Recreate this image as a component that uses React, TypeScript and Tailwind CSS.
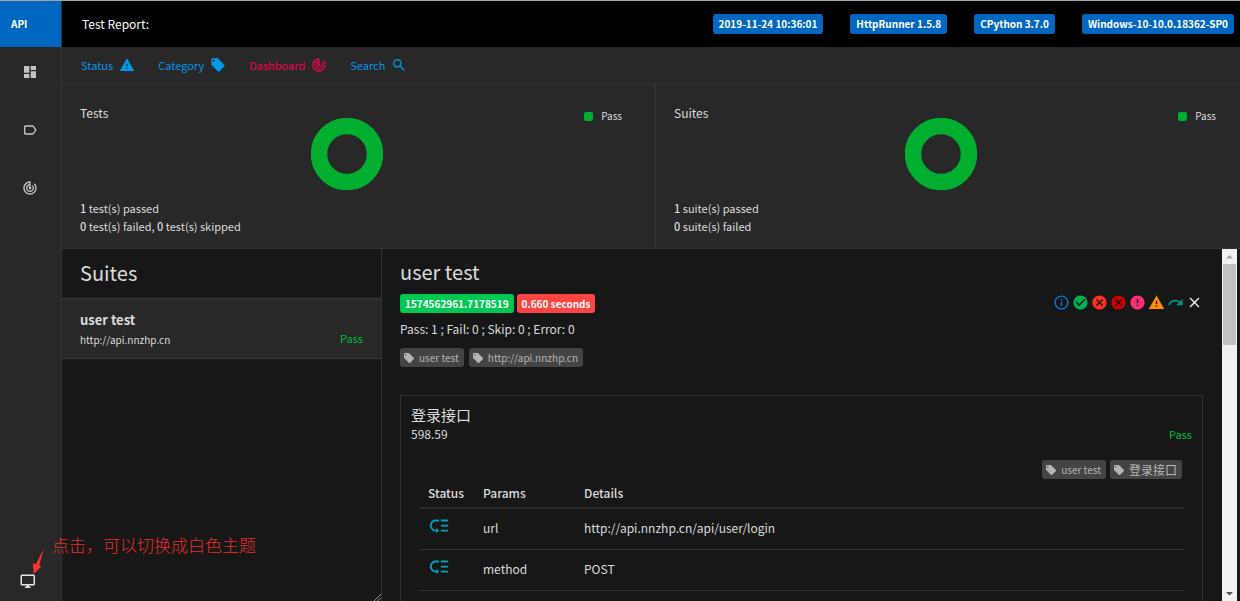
import type { ReactNode } from "react";
import {
  MdCancel,
  MdCheckCircle,
  MdClose,
  MdDashboard,
  MdError,
  MdInfoOutline,
  MdLabelOutline,
  MdLocalOffer,
  MdLowPriority,
  MdRedo,
  MdSearch,
  MdTrackChanges,
  MdWarning,
} from "react-icons/md";

const environment = ["2019-11-24 10:36:01", "HttpRunner 1.5.8", "CPython 3.7.0", "Windows-10-10.0.18362-SP0"];

const rows = [
  { param: "url", details: "http://api.nnzhp.cn/api/user/login" },
  { param: "method", details: "POST" },
];

function Donut() {
  return (
    <svg viewBox="0 0 72 72" className="h-[72px] w-[72px]" role="img" aria-label="All passed">
      <circle cx="36" cy="36" r="28" fill="none" stroke="#00af30" strokeWidth="16.500" />
    </svg>
  );
}

function Summary({ title, className, children }: { title: string; className: string; children: ReactNode }) {
  return (
    <section className={"flex flex-1 flex-col justify-between border-[#383838] pt-[19px] pb-[13px] pl-[18px] " + className}>
      <div className="grid grid-cols-[231px_72px_1fr]">
        <h2>{title}</h2>
        <div className="pt-[14px]">
          <Donut />
        </div>
        <div className="flex items-center gap-2 justify-self-end self-start pt-[3px] text-[10px]">
          <span className="h-[9px] w-[9px] rounded-xs bg-[#00af30]" />
          Pass
        </div>
      </div>
      <div className="text-[11px]">{children}</div>
    </section>
  );
}

function Tag({ children }: { children: ReactNode }) {
  return (
    <span className="flex h-[19px] items-center gap-1 rounded-[3px] bg-[#444] pr-[5px] pl-[3px] text-[10px] text-[#b5b5b5]">
      <MdLocalOffer className="h-3 w-3" />
      {children}
    </span>
  );
}

export default function App() {
  return (
    <div
      lang="zh-CN"
      className="relative flex h-screen overflow-hidden border-t border-[#a5a5a5] bg-[#171717] font-['Noto_Sans_CJK_SC',sans-serif] text-xs leading-[18px] text-[#dcdcdc]"
    >
      <aside className="flex w-[62px] shrink-0 flex-col border-r border-[#333] bg-[#282828] text-[#c4c4c4]">
        <a href="#home" className="flex h-[46px] items-center bg-[#0067c0] pl-[11px] text-[10px] font-bold text-white">
          API
        </a>
        <nav className="flex flex-col items-center gap-[42px] pt-[17px]">
          <button aria-label="Suites" className="mr-px">
            <MdDashboard className="h-4 w-4" />
          </button>
          <button aria-label="Categories" className="mr-px">
            <MdLabelOutline className="h-4 w-4" />
          </button>
          <button aria-label="Dashboard" className="mr-px">
            <MdTrackChanges className="h-4 w-4" />
          </button>
        </nav>
        <button aria-label="Switch theme" className="mt-auto mb-3 ml-5 self-start text-[#e4e4e4]">
          <svg viewBox="0 0 16 16" className="h-4 w-4" aria-hidden="true">
            <rect x="1.250" y="2.250" width="13" height="9.500" rx="0.800" fill="none" stroke="currentColor" strokeWidth="1.500" />
            <path d="M6.500 12H9V13.500H10.500V15H5V13.500H6.500Z" fill="currentColor" />
          </svg>
        </button>
      </aside>

      <div className="flex min-w-0 flex-1 flex-col">
        <header className="flex h-[46px] shrink-0 items-center justify-between bg-black pr-[6px] pl-5">
          <h1 className="text-white">Test Report:</h1>
          <div className="flex gap-[27px] text-[10px] font-bold text-white">
            {environment.map((label) => (
              <span key={label} className="flex h-5 items-center rounded-[3px] bg-[#0067c0] px-[6px]">
                {label}
              </span>
            ))}
          </div>
        </header>

        <nav className="flex h-[38px] shrink-0 items-center gap-[23px] border-b border-[#333] bg-[#282828] pb-[2px] pl-[19px] text-[11px] text-[#0397e8]">
          <button className="flex items-center gap-[6px]">
            Status <MdWarning className="h-4 w-4" />
          </button>
          <button className="flex items-center gap-[6px]">
            Category <MdLocalOffer className="h-4 w-4" />
          </button>
          <button className="flex items-center gap-[6px] text-[#f0034f]">
            Dashboard <MdTrackChanges className="h-4 w-4" />
          </button>
          <button className="flex items-center gap-[6px]">
            Search <MdSearch className="h-4 w-4" />
          </button>
        </nav>

        <div className="flex h-[164px] shrink-0 border-b border-[#333] bg-[#282828]">
          <Summary title="Tests" className="border-r pr-[33px]">
            <p>
              <b className="font-medium">1</b> test(s) passed
            </p>
            <p>
              <b className="font-medium">0</b> test(s) failed, <b className="font-medium">0</b> test(s) skipped
            </p>
          </Summary>
          <Summary title="Suites" className="pr-6">
            <p>
              <b className="font-medium">1</b> suite(s) passed
            </p>
            <p>
              <b className="font-medium">0</b> suite(s) failed
            </p>
          </Summary>
        </div>

        <main className="flex min-h-0 flex-1">
          <section className="relative flex w-[320px] shrink-0 flex-col border-r border-[#333]">
            <h2 className="flex h-[49px] shrink-0 items-center pb-[2px] pl-[18px] text-xl">Suites</h2>
            <a href="#suite" className="flex items-end justify-between border-y border-[#383838] bg-[#282828] pt-3 pr-[18px] pb-[9px] pl-[18px]">
              <span className="flex flex-col gap-[2px]">
                <b className="text-[13px]">user test</b>
                <span className="text-[10px]">http://api.nnzhp.cn</span>
              </span>
              <span className="pb-[2px] text-[11px] text-[#00bc38]">Pass</span>
            </a>
            <svg viewBox="0 0 8 8" className="absolute right-0 bottom-0 h-2 w-2" stroke="#999" aria-hidden="true">
              <path d="M1 8L8 1M4.500 8L8 4.500" />
            </svg>
          </section>

          <section className="min-w-0 flex-1 overflow-hidden pr-[19px] pl-[18px]">
            <h2 className="flex h-[45px] items-center text-xl">user test</h2>
            <div className="flex items-start justify-between">
              <div className="flex gap-[3px] text-[10px] font-bold text-white">
                <span className="flex h-[19px] items-center rounded-[3px] bg-[#00c853] px-[5px]">1574562961.7178519</span>
                <span className="flex h-[19px] items-center rounded-[3px] bg-[#ff4444] px-[5px]">0.660 seconds</span>
              </div>
              <div className="flex gap-[2px]">
                <button aria-label="Info">
                  <MdInfoOutline className="h-[17px] w-[17px] text-[#0a7ad8]" />
                </button>
                <button aria-label="Pass">
                  <MdCheckCircle className="h-[17px] w-[17px] text-[#00af50]" />
                </button>
                <button aria-label="Fail">
                  <MdCancel className="h-[17px] w-[17px] text-[#ff3020]" />
                </button>
                <button aria-label="Fatal">
                  <MdCancel className="h-[17px] w-[17px] text-[#cc0000]" />
                </button>
                <button aria-label="Error">
                  <MdError className="h-[17px] w-[17px] text-[#ff2e72]" />
                </button>
                <button aria-label="Warning">
                  <MdWarning className="h-[17px] w-[17px] text-[#ff8c00]" />
                </button>
                <button aria-label="Skip">
                  <MdRedo className="h-[17px] w-[17px] text-[#009688]" />
                </button>
                <button aria-label="Clear filters">
                  <MdClose className="h-[17px] w-[17px] text-[#eee]" />
                </button>
              </div>
            </div>
            <p className="pt-[7px]">Pass: 1 ; Fail: 0 ; Skip: 0 ; Error: 0</p>
            <div className="flex gap-[5px] pt-[10px]">
              <Tag>user test</Tag>
              <Tag>http://api.nnzhp.cn</Tag>
            </div>

            <article className="mt-7 border border-[#333] px-[10px] pt-[9px] pb-10">
              <h3 className="text-[15px] leading-5">登录接口</h3>
              <div className="flex justify-between">
                <span>598.59</span>
                <span className="text-[11px] text-[#00bc38]">Pass</span>
              </div>
              <div className="flex justify-end gap-1 pt-[17px] pr-[10px]">
                <Tag>user test</Tag>
                <Tag>
                  <span className="text-xs">登录接口</span>
                </Tag>
              </div>
              <div className="px-2">
                <table className="w-full text-left">
                  <thead>
                    <tr className="h-[29px] border-b-2 border-[#2b2b2b]">
                      <th className="w-[55px] pl-[9px] font-medium">Status</th>
                      <th className="w-[101px] pl-[9px] font-medium">Params</th>
                      <th className="pl-[9px] font-medium">Details</th>
                    </tr>
                  </thead>
                  <tbody>
                    {rows.map((row) => (
                      <tr key={row.param} className="h-[41px] border-b border-[#333]">
                        <td className="pl-[9px]">
                          <MdLowPriority className="mb-[6px] h-[22px] w-[22px] text-[#009fc4]" aria-label="Logged" />
                        </td>
                        <td className="pb-[2px] pl-[9px]">{row.param}</td>
                        <td className="pb-[2px] pl-[9px]">{row.details}</td>
                      </tr>
                    ))}
                  </tbody>
                </table>
              </div>
            </article>
          </section>

          <div className="mr-[3px] flex w-[15px] shrink-0 flex-col items-center bg-[#f1f1f1]" aria-hidden="true">
            <svg viewBox="0 0 15 15" className="h-[15px] w-[15px] shrink-0" fill="#a3a3a3">
              <path d="M4 9.500L7.500 6L11 9.500Z" />
            </svg>
            <div className="h-[81px] w-[13px] bg-[#c1c1c1]" />
            <svg viewBox="0 0 15 15" className="mt-auto h-[15px] w-[15px] shrink-0" fill="#505050">
              <path d="M4 6L7.500 9.500L11 6Z" />
            </svg>
          </div>
        </main>
      </div>

      <div className="absolute bottom-[26px] left-8 flex items-start gap-2 text-[#e5302d]">
        <svg viewBox="0 0 12 26" className="mt-4 h-[26px] w-3" fill="#ff3333" aria-hidden="true">
          <path d="M11.700 0L7.300 16L9.300 17.500L1.800 25L0.800 14L3.700 15.500Z" />
        </svg>
        <span className="text-[17px] font-light leading-6">点击，可以切换成白色主题</span>
      </div>
    </div>
  );
}
